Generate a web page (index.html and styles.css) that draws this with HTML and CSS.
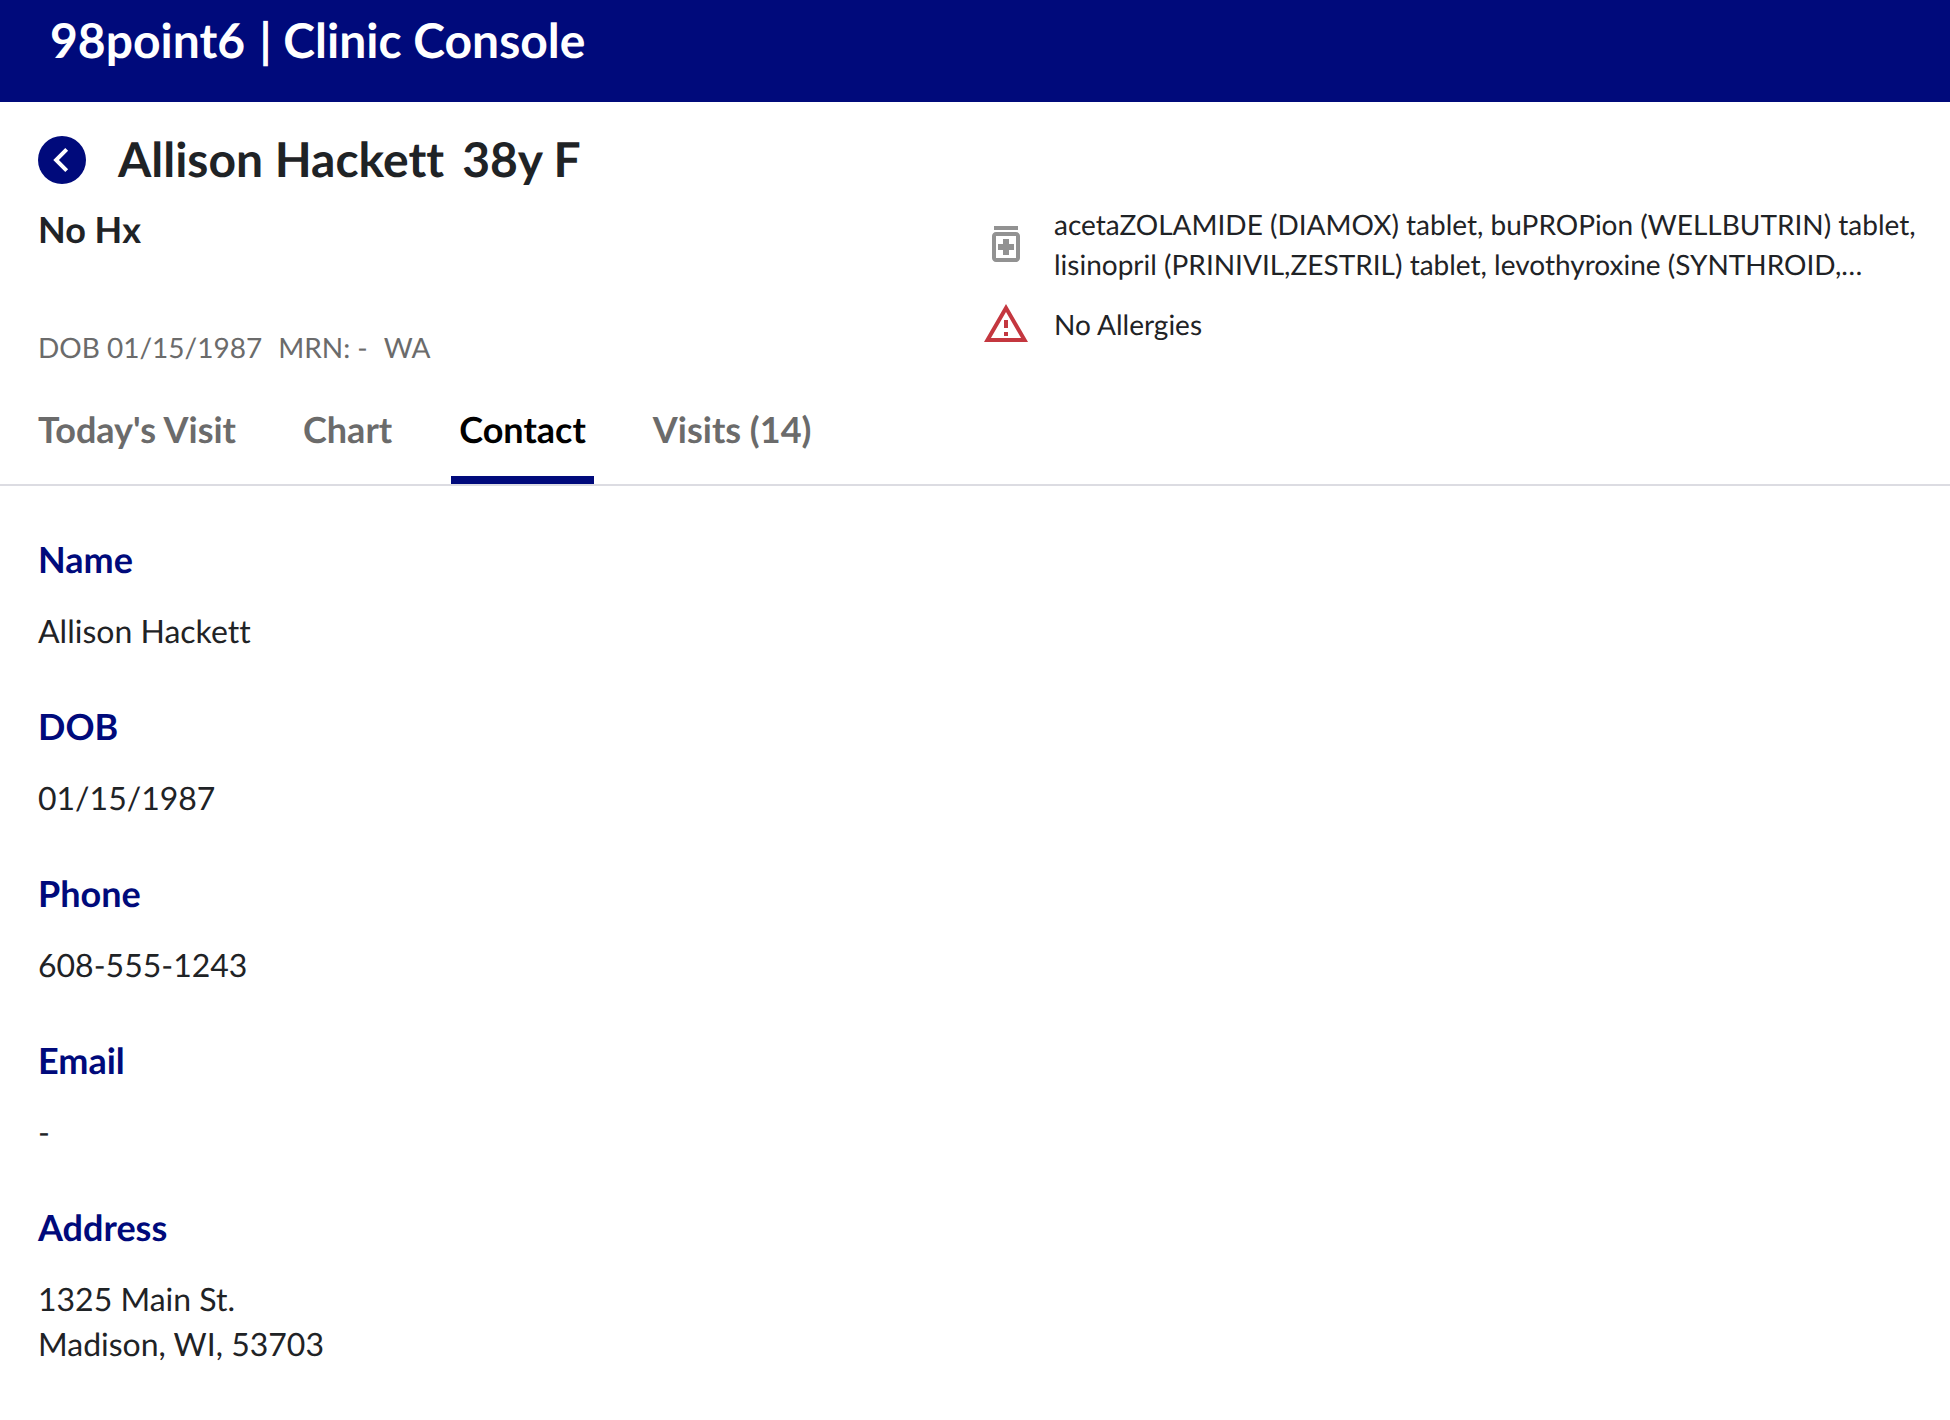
FILE: index.html
```
<!DOCTYPE html>
<html lang="en">
<head>
    <meta charset="UTF-8">
    <meta name="viewport" content="width=device-width, initial-scale=1.0">
    <title>98point6 | Clinic Console</title>
    <link rel="stylesheet" href="styles.css">
</head>
<body>
    <header class="topbar">
        <span class="logo">98point6</span>
        <span class="topbar-title">| Clinic Console</span>
    </header>

    <!-- Patient Banner -->
    <section class="patient">
        <div class="patient-heading">
            <button class="back-btn" type="button" aria-label="Back">
                <svg viewBox="0 0 24 24" width="48" height="48" fill="currentColor" aria-hidden="true">
                    <path d="M15.05 7.41 13.64 6l-6 6 6 6 1.41-1.41L10.47 12z"/>
                </svg>
            </button>
            <h1><span>Allison Hackett</span> <span>38y F</span></h1>
        </div>

        <div class="patient-summary">
            <div class="patient-info">
                <p class="history">No Hx</p>
                <div class="demographics">
                    <span>DOB 01/15/1987</span>
                    <span>MRN: -</span>
                    <span>WA</span>
                </div>
            </div>
            <div class="alerts">
                <div class="alert-row">
                    <svg class="icon-meds" viewBox="0 0 24 24" width="48" height="48" fill="currentColor" aria-hidden="true">
                        <path d="M6 3h12v2H6zM17 6H7c-1.1 0-2 .9-2 2v11c0 1.1.9 2 2 2h10c1.1 0 2-.9 2-2V8c0-1.1-.9-2-2-2zm0 13H7V8h10v11z"/>
                        <path d="M10.5 9.5h3V12H16v3h-2.5v2.5h-3V15H8v-3h2.5z"/>
                    </svg>
                    <p>acetaZOLAMIDE (DIAMOX) tablet, buPROPion (WELLBUTRIN) tablet, lisinopril (PRINIVIL,ZESTRIL) tablet, levothyroxine (SYNTHROID,…</p>
                </div>
                <div class="alert-row">
                    <svg class="icon-allergy" viewBox="0 0 24 24" width="48" height="48" fill="currentColor" aria-hidden="true">
                        <path d="M12 5.99 19.53 19H4.47L12 5.99M12 2 1 21h22L12 2zm1 14h-2v2h2v-2zm0-6h-2v4h2v-4z"/>
                    </svg>
                    <p>No Allergies</p>
                </div>
            </div>
        </div>
    </section>

    <nav class="tabs">
        <a class="tab" href="#visit">Today's Visit</a>
        <a class="tab" href="#chart">Chart</a>
        <a class="tab active" href="#contact" aria-current="page">Contact</a>
        <a class="tab" href="#visits">Visits (14)</a>
    </nav>

    <!-- Contact Details -->
    <main class="contact" id="contact">
        <section class="field">
            <h2>Name</h2>
            <p>Allison Hackett</p>
        </section>
        <section class="field">
            <h2>DOB</h2>
            <p>01/15/1987</p>
        </section>
        <section class="field">
            <h2>Phone</h2>
            <p>608-555-1243</p>
        </section>
        <section class="field">
            <h2>Email</h2>
            <p>-</p>
        </section>
        <section class="field">
            <h2>Address</h2>
            <p>1325 Main St.<br>Madison, WI, 53703</p>
        </section>
    </main>
</body>
</html>
```
FILE: styles.css
```
* {
    margin: 0;
    padding: 0;
    box-sizing: border-box;
}

body {
    font-family: Lato, "Liberation Sans", sans-serif;
    font-variant-ligatures: none;
    text-rendering: geometricPrecision;
    background: #fff;
    color: #1f2326;
}

/* Top Bar */
.topbar {
    display: flex;
    align-items: center;
    gap: 14px;
    padding: 12px 50px 32px;
    background: #000a7b;
    color: #fff;
    font-size: 48px;
    line-height: 58px;
    font-weight: 700;
}

/* Patient Banner */
.patient {
    padding: 26px 24px 0 38px;
}

.patient-heading {
    display: flex;
    align-items: center;
    gap: 32px;
    margin-bottom: 12px;
}

.patient-heading h1 {
    display: flex;
    gap: 18px;
    font-size: 48px;
    line-height: 64px;
    font-weight: 700;
}

.back-btn {
    display: flex;
    width: 48px;
    height: 48px;
    border: none;
    border-radius: 50%;
    background: #000a7b;
    color: #fff;
    cursor: pointer;
}

.patient-summary {
    display: grid;
    grid-template-columns: 1fr 1fr;
}

.history {
    margin-bottom: 73px;
    font-size: 36px;
    line-height: 50px;
    font-weight: 700;
}

.demographics {
    display: flex;
    gap: 16px;
    font-size: 28px;
    line-height: 40px;
    color: #6b6b6b;
}

.alerts {
    display: flex;
    flex-direction: column;
    gap: 16px;
}

.alert-row {
    display: flex;
    align-items: center;
    gap: 24px;
    font-size: 28px;
    line-height: 40px;
}

.alert-row svg {
    flex-shrink: 0;
}

.icon-meds {
    color: #929292;
}

.icon-allergy {
    color: #c4373f;
}

/* Tabs */
.tabs {
    display: flex;
    gap: 51px;
    padding: 37px 30px 0;
    border-bottom: 2px solid #dcdce2;
}

.tab {
    padding: 0 8px 22px;
    border-bottom: 8px solid transparent;
    font-size: 36px;
    line-height: 50px;
    font-weight: 700;
    color: #6b6b6b;
    text-decoration: none;
}

.tab.active {
    color: #000;
    border-bottom-color: #000a7b;
}

/* Contact Details */
.contact {
    display: flex;
    flex-direction: column;
    gap: 48px;
    padding: 48px 38px;
}

.field h2 {
    margin-bottom: 24px;
    font-size: 36px;
    line-height: 50px;
    font-weight: 700;
    color: #000a7b;
}

.field p {
    font-size: 32px;
    line-height: 45px;
}
```
